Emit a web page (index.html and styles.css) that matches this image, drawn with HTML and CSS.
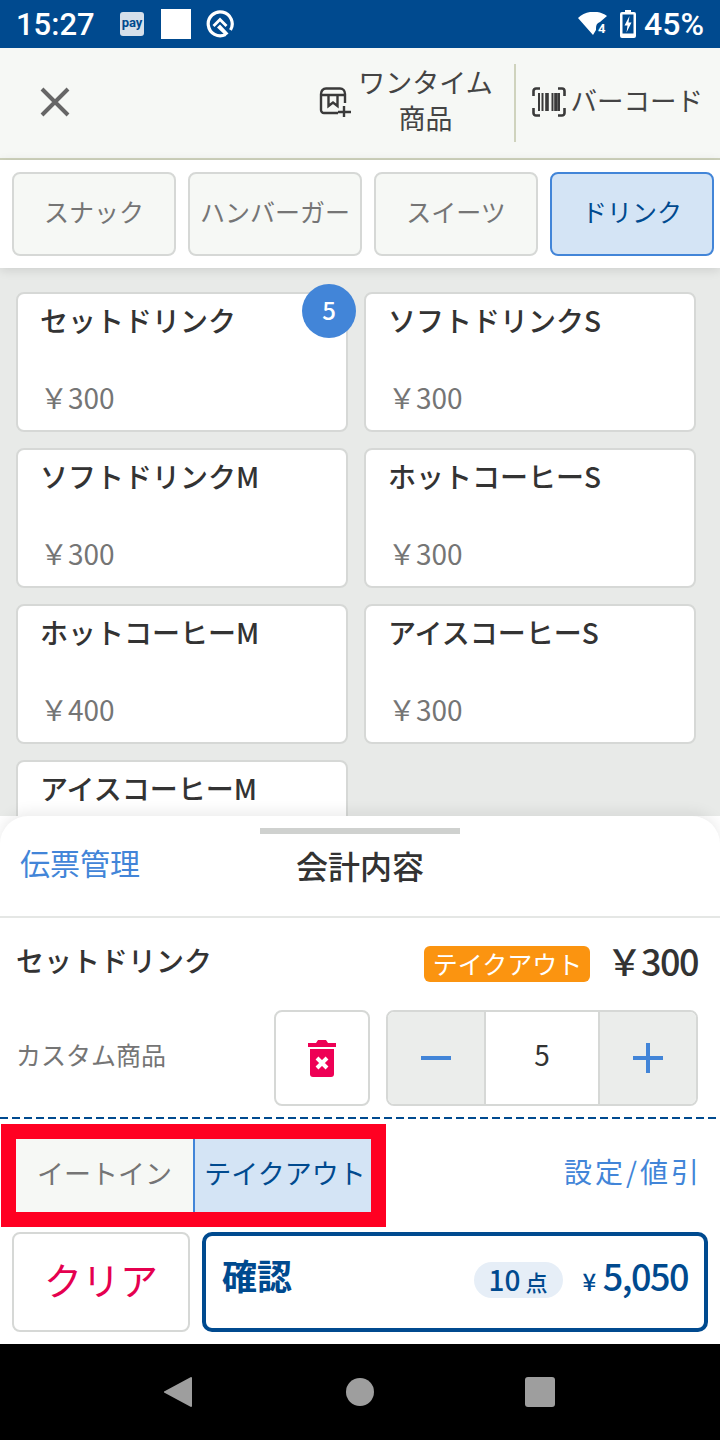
FILE: index.html
```html
<!DOCTYPE html>
<html lang="ja">
<head>
    <meta charset="UTF-8">
    <meta name="viewport" content="width=device-width, initial-scale=1.0">
    <title>会計内容</title>
    <link rel="stylesheet" href="styles.css">
</head>
<body>
<div class="app">

    <!-- status bar -->
    <div class="status-bar">
        <span class="clock">15:27</span>
        <span class="pay-icon">pay</span>
        <span class="white-square"></span>
        <svg class="status-ring" width="28" height="28" viewBox="0 0 28 28">
            <path d="M19.500 24.600A12 12 0 1 1 24.500 20" fill="none" stroke="#fff" stroke-width="3.200"/>
            <path d="M6.500 15 14 7.500 21.500 15l-2 2L14 11.500 8.500 17z" fill="#fff"/>
            <path d="M11 17.500l3-3 8.500 9-2.800 2.300z" fill="#fff"/>
        </svg>
        <span class="status-spacer"></span>
        <svg class="status-wifi" width="30" height="24" viewBox="0 0 30 24">
            <path d="M0 6C8-2 21-2 29 4l-7 6c-3 1-4 3-4 6v2l-3 5z" fill="#fff"/>
            <text x="20" y="21" class="wifi-num">4</text>
        </svg>
        <svg class="status-battery" width="16" height="28" viewBox="0 0 16 28">
            <path d="M5 0h6v2h3a2 2 0 0 1 2 2v22a2 2 0 0 1-2 2H2a2 2 0 0 1-2-2V4a2 2 0 0 1 2-2h3z" fill="#fff"/>
            <path d="M2.500 4.500h11v19h-11z" fill="#004a8f"/>
            <path d="M9.500 6 4.500 15.500h3L6.500 22.500l5-10H8.500z" fill="#fff"/>
        </svg>
        <span class="battery-text">45%</span>
    </div>

    <!-- header -->
    <div class="top-bar">
        <svg class="close-icon" width="30" height="30" viewBox="0 0 30 30">
            <path d="M2 2 28 28M28 2 2 28" stroke="#666" stroke-width="4" fill="none"/>
        </svg>
        <div class="top-actions">
            <svg width="32" height="30" viewBox="0 0 32 30" fill="none" stroke="#3a3a3a" stroke-width="2.400">
                <path d="M19 26H5a3 3 0 0 1-3-3V7c0-3 2-5.500 5-5.500h14c3 0 5 2.500 5 5.500v9"/>
                <path d="M2 8h24M9.500 8v11l4.500-3.500 4.500 3.500V8"/>
                <path d="M25 19v11M19 25h13"/>
            </svg>
            <div class="onetime-label">ワンタイム<br>商品</div>
            <div class="top-divider"></div>
            <svg width="34" height="30" viewBox="0 0 34 30" fill="none" stroke="#3a3a3a">
                <path d="M8 1.500H4a2.500 2.500 0 0 0-2.500 2.500v5M26 1.500h4a2.500 2.500 0 0 1 2.500 2.500v5M8 28.500H4A2.500 2.500 0 0 1 1.500 26v-5M26 28.500h4a2.500 2.500 0 0 0 2.500-2.500v-5" stroke-width="2.600"/>
                <path d="M7 6v18M10.500 6v18M20.500 6v18M27 6v18" stroke-width="2"/>
                <path d="M15 6v18M24 6v18" stroke-width="3.600"/>
            </svg>
            <div class="barcode-label">バーコード</div>
        </div>
    </div>

    <!-- category tabs -->
    <div class="tabs">
        <div class="tab">スナック</div>
        <div class="tab tab-wide">ハンバーガー</div>
        <div class="tab">スイーツ</div>
        <div class="tab tab-active">ドリンク</div>
    </div>

    <!-- products -->
    <div class="product-area">
        <div class="product-grid">
            <div class="product-card">
                <div class="product-name">セットドリンク</div>
                <div class="product-price">￥300</div>
                <span class="count-badge">5</span>
            </div>
            <div class="product-card">
                <div class="product-name">ソフトドリンクS</div>
                <div class="product-price">￥300</div>
            </div>
            <div class="product-card">
                <div class="product-name">ソフトドリンクM</div>
                <div class="product-price">￥300</div>
            </div>
            <div class="product-card">
                <div class="product-name">ホットコーヒーS</div>
                <div class="product-price">￥300</div>
            </div>
            <div class="product-card">
                <div class="product-name">ホットコーヒーM</div>
                <div class="product-price">￥400</div>
            </div>
            <div class="product-card">
                <div class="product-name">アイスコーヒーS</div>
                <div class="product-price">￥300</div>
            </div>
            <div class="product-card">
                <div class="product-name">アイスコーヒーM</div>
            </div>
        </div>
    </div>

    <!-- bottom sheet -->
    <div class="sheet">
        <div class="sheet-handle"></div>
        <div class="sheet-head">
            <span class="slip-link">伝票管理</span>
            <span class="sheet-title">会計内容</span>
        </div>

        <div class="line-item">
            <div class="line-top">
                <span class="line-name">セットドリンク</span>
                <span class="takeout-badge">テイクアウト</span>
                <span class="line-price">￥300</span>
            </div>
            <div class="line-bottom">
                <span class="line-note">カスタム商品</span>
                <div class="trash-btn">
                    <svg width="28" height="37" viewBox="0 0 28 37">
                        <path d="M0 3h8l2-3h8l2 3h8v4H0z" fill="#ee0055"/>
                        <path d="M2 9h24v25a3 3 0 0 1-3 3H5a3 3 0 0 1-3-3z" fill="#ee0055"/>
                        <path d="M9 18l10 10M19 18 9 28" stroke="#fff" stroke-width="4" fill="none"/>
                    </svg>
                </div>
                <div class="stepper">
                    <div class="step-btn">
                        <svg width="30" height="30" viewBox="0 0 30 30"><path d="M0 15h30" stroke="#4285d8" stroke-width="4"/></svg>
                    </div>
                    <div class="step-value">5</div>
                    <div class="step-btn">
                        <svg width="30" height="30" viewBox="0 0 30 30"><path d="M0 15h30M15 0v30" stroke="#4285d8" stroke-width="4"/></svg>
                    </div>
                </div>
            </div>
        </div>

        <div class="dashed-line"></div>

        <div class="order-row">
            <div class="eat-toggle">
                <div class="eat-option">イートイン</div>
                <div class="eat-option eat-active">テイクアウト</div>
            </div>
            <span class="discount-link">設定/値引</span>
        </div>

        <div class="action-row">
            <div class="clear-btn">クリア</div>
            <div class="confirm-btn">
                <span class="confirm-label">確認</span>
                <span class="count-pill"><b>10</b> 点</span>
                <span class="total"><small>¥</small>5,050</span>
            </div>
        </div>
    </div>

    <!-- android nav -->
    <div class="nav-bar">
        <svg width="28" height="32" viewBox="0 0 28 32"><path d="M27 1a1 1 0 0 1 1 1v28a1 1 0 0 1-1 1L1 17a1 1 0 0 1 0-2z" fill="#9e9e9e"/></svg>
        <span class="nav-circle"></span>
        <span class="nav-square"></span>
    </div>
</div>
</body>
</html>
```

FILE: styles.css
```css
* {
    box-sizing: border-box;
}
body {
    margin: 0;
    font-family: 'Noto Sans CJK JP', 'Noto Sans', sans-serif;
    color: #333;
    background-color: #fff;
}
.app {
    width: 720px;
    height: 1440px;
    display: flex;
    flex-direction: column;
    overflow: hidden;
}

/* status bar */
.status-bar {
    height: 48px;
    flex: none;
    display: flex;
    align-items: center;
    padding: 0 17px 0 16px;
    background-color: #004a8f;
    color: #fff;
    font-family: 'Roboto', sans-serif;
    font-weight: 500;
}
.clock {
    font-size: 31px;
    width: 104px;
}
.pay-icon {
    width: 24px;
    height: 24px;
    background-color: #d5dfea;
    border-radius: 3px;
    color: #004a8f;
    font-size: 13px;
    font-weight: 700;
    line-height: 21px;
    text-align: center;
}
.white-square {
    width: 30px;
    height: 30px;
    margin-left: 17px;
    background-color: #fff;
}
.status-ring {
    margin-left: 15px;
}
.status-spacer {
    flex: 1;
}
.wifi-num {
    font-size: 13px;
    font-weight: 700;
    fill: #fff;
}
.status-battery {
    margin-left: 12px;
}
.battery-text {
    margin-left: 8px;
    margin-right: -1px;
    font-size: 32px;
}

/* header */
.top-bar {
    height: 112px;
    flex: none;
    display: flex;
    align-items: center;
    justify-content: space-between;
    padding: 0 17px 2px 40px;
    background-color: #f6f8f5;
    border-bottom: 2px solid #cfd3bd;
}
.top-actions {
    display: flex;
    align-items: center;
}
.onetime-label {
    width: 136px;
    margin-left: 7px;
    padding-bottom: 4px;
    font-size: 27px;
    line-height: 36px;
    text-align: center;
    color: #444;
}
.top-divider {
    width: 2px;
    height: 78px;
    margin: 2px 16px 0 20px;
    background-color: #cfd3bd;
}
.barcode-label {
    margin-left: 5px;
    padding-bottom: 6px;
    font-size: 26.5px;
    color: #444;
}

/* tabs */
.tabs {
    height: 108px;
    flex: none;
    display: flex;
    gap: 12px;
    padding: 12px;
    background-color: #fff;
    box-shadow: 0 2px 10px rgba(0, 0, 0, 0.12);
    position: relative;
}
.tab {
    flex: none;
    width: 164px;
    display: flex;
    align-items: center;
    justify-content: center;
    padding-bottom: 6px;
    background-color: #f6f8f5;
    border: 2px solid #d6d8d6;
    border-radius: 8px;
    font-size: 25px;
    color: #757575;
}
.tab-wide {
    width: 174px;
}
.tab-active {
    background-color: #d4e4f5;
    border-color: #4285d8;
    color: #004a8f;
}

/* products */
.product-area {
    flex: 1;
    min-height: 0;
    padding: 24px 16px 0;
    background-color: #e8eae8;
    overflow: hidden;
}
.product-grid {
    display: grid;
    grid-template-columns: 332px 332px;
    grid-auto-rows: 140px;
    gap: 16px;
}
.product-card {
    position: relative;
    display: flex;
    flex-direction: column;
    justify-content: space-between;
    padding: 4px 22px 11px;
    background-color: #fff;
    border: 2px solid #d6d8d6;
    border-radius: 8px;
}
.product-name {
    font-size: 28px;
    font-weight: 500;
    line-height: 44px;
}
.product-price {
    font-size: 28px;
    line-height: 44px;
    color: #757575;
}
.count-badge {
    position: absolute;
    top: -10px;
    right: -10px;
    width: 54px;
    height: 54px;
    border-radius: 50%;
    background-color: #4285d8;
    color: #fff;
    font-size: 24px;
    font-weight: 500;
    line-height: 52px;
    text-align: center;
}

/* bottom sheet */
.sheet {
    flex: none;
    position: relative;
    height: 528px;
    padding-top: 12px;
    background-color: #fff;
    border-radius: 28px 28px 0 0;
    box-shadow: 0 -4px 14px rgba(0, 0, 0, 0.08);
}
.sheet-handle {
    width: 200px;
    height: 6px;
    margin: 0 auto;
    background-color: #cfd1cf;
}
.sheet-head {
    height: 84px;
    position: relative;
    display: flex;
    justify-content: center;
    padding-top: 9px;
    border-bottom: 2px solid #e5e7e5;
}
.slip-link {
    position: absolute;
    left: 20px;
    top: 6px;
    font-size: 30px;
    line-height: 44px;
    color: #4285d8;
}
.sheet-title {
    font-size: 32px;
    font-weight: 500;
    line-height: 44px;
}
.line-item {
    padding: 0 22px 0 16px;
}
.line-top {
    height: 92px;
    display: flex;
    align-items: center;
}
.line-name {
    flex: 1;
    padding-bottom: 8px;
    font-size: 28px;
    font-weight: 500;
}
.takeout-badge {
    width: 166px;
    height: 36px;
    background-color: #fb9410;
    border-radius: 6px;
    color: #fff;
    font-size: 25px;
    line-height: 34px;
    text-align: center;
}
.line-price {
    margin-left: 16px;
    padding-bottom: 8px;
    font-size: 36px;
    font-weight: 500;
    letter-spacing: -1.5px;
    line-height: 44px;
}
.line-bottom {
    height: 96px;
    display: flex;
    align-items: stretch;
}
.line-note {
    width: 258px;
    font-size: 25px;
    line-height: 88px;
    color: #757575;
}
.trash-btn {
    width: 96px;
    display: flex;
    align-items: center;
    justify-content: center;
    border: 2px solid #d6d8d6;
    border-radius: 8px;
}
.stepper {
    width: 312px;
    margin-left: 16px;
    display: flex;
    border: 2px solid #d6d8d6;
    border-radius: 8px;
    overflow: hidden;
}
.step-btn {
    flex: 1;
    display: flex;
    align-items: center;
    justify-content: center;
    background-color: #ebedeb;
}
.step-value {
    width: 116px;
    border-left: 2px solid #d6d8d6;
    border-right: 2px solid #d6d8d6;
    font-size: 28px;
    line-height: 85px;
    text-align: center;
}
.dashed-line {
    height: 2px;
    margin-top: 11px;
    background: repeating-linear-gradient(90deg, #004a8f 0 8px, transparent 8px 12px);
}
.order-row {
    display: flex;
    align-items: center;
    justify-content: space-between;
    margin: 5px 18px 0 1px;
}
.eat-toggle {
    display: flex;
    width: 385px;
    height: 103px;
    border: solid #ff0022;
    border-width: 15px;
}
.eat-option {
    width: 177px;
    display: flex;
    align-items: center;
    justify-content: center;
    padding-bottom: 7px;
    background-color: #f6f8f5;
    font-size: 27px;
    color: #757575;
}
.eat-active {
    width: 178px;
    padding-left: 4px;
    background-color: #d4e4f5;
    border-left: 2px solid #4285d8;
    color: #004a8f;
}
.discount-link {
    padding-bottom: 10px;
    font-size: 28px;
    letter-spacing: 3px;
    color: #4285d8;
}
.action-row {
    display: flex;
    gap: 12px;
    height: 100px;
    margin: 5px 12px 0;
}
.clear-btn {
    width: 178px;
    display: flex;
    align-items: center;
    justify-content: center;
    padding-bottom: 8px;
    border: 2px solid #d6d8d6;
    border-radius: 8px;
    color: #e5004f;
    font-size: 38px;
}
.confirm-btn {
    flex: 1;
    display: flex;
    align-items: center;
    padding: 0 16px 8px 16px;
    border: 4px solid #004a8f;
    border-radius: 10px;
    color: #004a8f;
}
.confirm-label {
    flex: 1;
    padding-bottom: 8px;
    font-size: 35px;
    font-weight: 700;
}
.count-pill {
    width: 89px;
    height: 36px;
    margin-top: 4px;
    background-color: #e6eef7;
    border-radius: 18px;
    font-size: 22px;
    font-weight: 500;
    line-height: 34px;
    text-align: center;
}
.count-pill b {
    font-size: 28px;
    font-weight: 500;
}
.total {
    margin-left: 20px;
    padding-bottom: 6px;
    font-size: 36px;
    font-weight: 500;
    letter-spacing: -1.5px;
}
.total small {
    margin-right: 8px;
    font-size: 24px;
}

/* android nav */
.nav-bar {
    height: 96px;
    flex: none;
    display: flex;
    align-items: center;
    background-color: #000;
    padding-left: 164px;
}
.nav-circle {
    width: 28px;
    height: 28px;
    margin-left: 154px;
    border-radius: 50%;
    background-color: #9e9e9e;
}
.nav-square {
    width: 30px;
    height: 30px;
    margin-left: 151px;
    border-radius: 3px;
    background-color: #9e9e9e;
}
```
